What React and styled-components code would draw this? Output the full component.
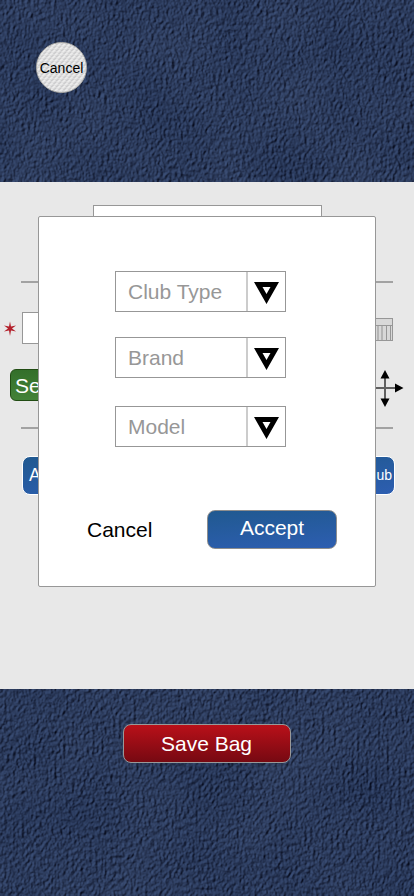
import React from "react";
import styled, { createGlobalStyle } from "styled-components";

const Global = createGlobalStyle`
  * { box-sizing: border-box; }
  body { margin: 0; background: #e8e8e8; font-family: "Liberation Sans", Arial, sans-serif; }
  button { font-family: inherit; margin: 0; padding: 0; white-space: nowrap; }
`;

const Page = styled.div`
  position: relative;
  display: flex;
  flex-direction: column;
  width: 414px;
  height: 896px;
  overflow: hidden;
`;

const Suede = styled.div`
  position: relative;
  flex: none;
  display: flex;
  height: ${(p) => p.$height}px;
  background: #293a60;
  overflow: hidden;
`;

const Grain = styled.svg`
  position: absolute;
  inset: 0;
`;

const Header = styled(Suede)`
  padding: 42px 0 0 36px;
`;

const Footer = styled(Suede)`
  justify-content: center;
  padding-top: 35px;
`;

const BallButton = styled.button`
  position: relative;
  display: flex;
  align-items: center;
  justify-content: center;
  width: 51px;
  height: 51px;
  border: 1px solid #aaa9a5;
  border-radius: 50%;
  overflow: hidden;
  background: #dedede;
  font-size: 14px;
  color: #000;
`;

const BallLabel = styled.span`
  position: relative;
`;

const SaveButton = styled.button`
  position: relative;
  width: 168px;
  height: 39px;
  padding: 1px 1px 0 0;
  border: 1px solid #999;
  border-radius: 8px;
  background: linear-gradient(#b91019, #760912);
  color: #fff;
  font-size: 21px;
`;

const Main = styled.main`
  flex: none;
  height: 507px;
  display: flex;
  flex-direction: column;
  background: #e8e8e8;
`;

const TitleField = styled.div`
  width: 229px;
  height: 40px;
  margin: 23px 0 36px 93px;
  border: 1px solid #979797;
  background: #fff;
`;

const Divider = styled.div`
  flex: none;
  height: 2px;
  margin: 0 21px;
  background: #a2a2a2;
`;

const FieldRow = styled.div`
  display: flex;
  height: 32px;
  margin-top: 29px;
  padding: 0 21px 0 3px;
  align-items: flex-start;
`;

const Star = styled.svg`
  flex: none;
  width: 14px;
  height: 32px;
  margin-right: 5px;
`;

const ClubField = styled.div`
  width: 200px;
  height: 32px;
  border: 1px solid #979797;
  background: #fff;
`;

const Trash = styled.svg`
  width: 30px;
  height: 23px;
  margin: 6px 0 0 auto;
`;

const SelectRow = styled.div`
  display: flex;
  height: 38px;
  margin: 25px 10px 20px;
`;

const SelectButton = styled.button`
  width: 90px;
  height: 32px;
  padding: 1px 0 0 4px;
  border: 1px solid #214c13;
  border-radius: 6px;
  background: linear-gradient(#336f2a, #438238);
  color: #fff;
  font-size: 21px;
  text-align: left;
`;

const Move = styled.svg`
  width: 37px;
  height: 38px;
  margin-left: auto;
`;

const AddRow = styled.div`
  display: flex;
  justify-content: space-between;
  margin: 27px 19px 0 22px;
`;

const AddButton = styled.button`
  width: 110px;
  height: 39px;
  padding: 0 2px 1px 6px;
  border: 1px solid #fff;
  border-radius: 8px;
  background: linear-gradient(170deg, #205990, #2d5eb1);
  color: #fff;
  font-size: ${(p) => p.$size}px;
  text-align: ${(p) => p.$align};
`;

const Modal = styled.section`
  position: absolute;
  left: 38px;
  top: 216px;
  width: 338px;
  height: 371px;
  display: flex;
  flex-direction: column;
  padding: 54px 38px 0 48px;
  border: 1px solid #979797;
  border-radius: 2px;
  background: #fff;
`;

const Selects = styled.div`
  display: grid;
  grid-template-rows: 66px 69px 41px;
  padding-left: 28px;
`;

const Select = styled.div`
  display: flex;
  width: 171px;
  height: 41px;
  border: 1px solid #979797;
  background: #fff;
`;

const Value = styled.div`
  flex: 1;
  padding-left: 12px;
  line-height: 39px;
  border-right: 2px solid #ccc;
  color: #979797;
  font-size: 21px;
`;

const Arrow = styled.svg`
  width: 37px;
  height: 39px;
`;

const Actions = styled.div`
  display: flex;
  justify-content: space-between;
  margin-top: 63px;
`;

const PlainButton = styled.button`
  height: 39px;
  border: 0;
  background: none;
  color: #000;
  font-size: 21px;
`;

const AcceptButton = styled.button`
  width: 130px;
  height: 39px;
  padding-bottom: 3px;
  border: 1px solid #8e8e8e;
  border-radius: 8px;
  background: linear-gradient(175deg, #205990, #2d5eb1);
  color: #fff;
  font-size: 21px;
`;

function SuedeGrain({ id, height, seed }) {
  return (
    <Grain width="414" height={height} aria-hidden="true">
      <filter id={id} x="0" y="0" width="100%" height="100%" colorInterpolationFilters="sRGB">
        <feTurbulence type="fractalNoise" baseFrequency="0.34 0.25" numOctaves="3" seed={seed} result="fine" />
        <feColorMatrix in="fine" type="matrix" values="0 0 0 0 0  0 0 0 0 0  0 0 0 0 0  0.6 0.4 0 0 0" result="h" />
        <feDiffuseLighting in="h" surfaceScale="1.9" diffuseConstant="1" lightingColor="#fff" result="l">
          <feDistantLight azimuth="215" elevation="48" />
        </feDiffuseLighting>
        <feColorMatrix in="l" type="matrix" values="0.26 0 0 0 -0.02  0 0.34 0 0 -0.02  0 0 0.46 0 0.02  0 0 0 0 1" result="cloth" />
        <feTurbulence type="fractalNoise" baseFrequency="0.012" numOctaves="2" seed={seed + 3} />
        <feColorMatrix type="matrix" values="1 0 0 0 0  1 0 0 0 0  1 0 0 0 0  0 0 0 0 1" result="patches" />
        <feComposite in="cloth" in2="patches" operator="arithmetic" k1="0" k2="1" k3="0.06" k4="-0.034" />
      </filter>
      <rect width="414" height={height} filter={`url(#${id})`} />
    </Grain>
  );
}

function Dropdown({ label }) {
  return (
    <Select>
      <Value>{label}</Value>
      <Arrow viewBox="0 0 37 39">
        <path fillRule="evenodd" d="M6 10H31L18.5 32ZM14.5 15L18.5 22L22.5 15Z" fill="#000" />
      </Arrow>
    </Select>
  );
}

export default function App() {
  return (
    <>
      <Global />
      <Page>
        <Header $height={182}>
          <SuedeGrain id="suede-top" height={182} seed={4} />
          <BallButton>
            <Grain width="49" height="49" aria-hidden="true">
              <defs>
                <pattern id="dimples" width="5" height="6" patternUnits="userSpaceOnUse">
                  <path d="M-1 2L1.5 0M4 2L6.5 0M1.5 5L4 3" stroke="#cbcbcd" strokeWidth="1.2" />
                  <path d="M.5 3L3 1M3 6L5.5 4M-2 6L.5 4" stroke="#eee" strokeWidth="1.3" />
                </pattern>
              </defs>
              <rect width="49" height="49" fill="url(#dimples)" />
            </Grain>
            <BallLabel>Cancel</BallLabel>
          </BallButton>
        </Header>
        <Main>
          <TitleField />
          <Divider />
          <FieldRow>
            <Star viewBox="0 0 14 32">
              <path d="M7 9.5L8 14.6L13 13.4L9 16.5L13 19.6L8 18.4L7 24L6 18.4L1 19.6L5 16.5L1 13.4L6 14.6Z" fill="#b3202b" />
            </Star>
            <ClubField />
            <Trash viewBox="0 0 30 23">
              <rect x=".5" y=".5" width="29" height="22" fill="#d8d8d8" stroke="#979797" />
              <path d="M0 7.5H30M23.5 8V22M27.5 8V22" stroke="#979797" />
              <path d="M15 8V22M19 8V22" stroke="#b5b5b5" strokeWidth="2" />
            </Trash>
          </FieldRow>
          <SelectRow>
            <SelectButton>Se</SelectButton>
            <Move viewBox="0 0 37 38">
              <path d="M0 19H29M18 8V31" stroke="#606060" strokeWidth="2" />
              <path d="M18 1L22.5 9.5H13.5ZM18 38L22.5 29.5H13.5ZM36.5 19L28 14.5V23.5Z" fill="#000" />
            </Move>
          </SelectRow>
          <Divider />
          <AddRow>
            <AddButton $size={17.5} $align="left">A</AddButton>
            <AddButton $size={14} $align="right">ub</AddButton>
          </AddRow>
        </Main>
        <Footer $height={207}>
          <SuedeGrain id="suede-bottom" height={207} seed={11} />
          <SaveButton>Save Bag</SaveButton>
        </Footer>
        <Modal>
          <Selects>
            <Dropdown label="Club Type" />
            <Dropdown label="Brand" />
            <Dropdown label="Model" />
          </Selects>
          <Actions>
            <PlainButton>Cancel</PlainButton>
            <AcceptButton>Accept</AcceptButton>
          </Actions>
        </Modal>
      </Page>
    </>
  );
}
